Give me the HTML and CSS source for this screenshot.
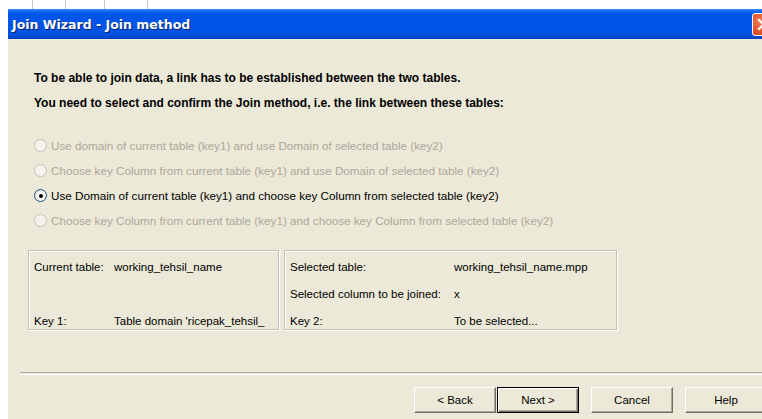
FILE: index.html
```html
<!DOCTYPE html>
<html lang="en">
<head>
<meta charset="utf-8">
<title>Join Wizard - Join method</title>
<link rel="stylesheet" href="styles.css">
</head>
<body>
  <div class="backdrop">
    <span class="tick t1"></span><span class="tick t2"></span><span class="tick t3"></span><span class="tick t4"></span>
  </div>
  <div class="window">
    <div class="titlebar">
      <span class="title">Join Wizard - Join method</span>
      <span class="close-btn" aria-label="Close">
        <svg width="21" height="21" viewBox="0 0 21 21">
          <path d="M6 6 L15 15 M15 6 L6 15" stroke="#fff" stroke-width="2.2" stroke-linecap="square"/>
        </svg>
      </span>
    </div>
    <div class="client">
      <div class="intro">
        <p>To be able to join data, a link has to be established between the two tables.</p>
        <p>You need to select and confirm the Join method, i.e. the link between these tables:</p>
      </div>

      <div class="methods">
        <label class="radio disabled"><span class="dot"></span>Use domain of current table (key1) and use Domain of selected table (key2)</label>
        <label class="radio disabled"><span class="dot"></span>Choose key Column from current table (key1) and use Domain of selected table (key2)</label>
        <label class="radio checked"><span class="dot"></span>Use Domain of current table (key1) and choose key Column from selected table (key2)</label>
        <label class="radio disabled"><span class="dot"></span>Choose key Column from current table (key1) and choose key Column from selected table (key2)</label>
      </div>

      <div class="info">
        <div class="info-box current">
          <span>Current table:</span><span>working_tehsil_name</span>
          <span></span><span></span>
          <span>Key 1:</span><span>Table domain 'ricepak_tehsil_</span>
        </div>
        <div class="info-box selected">
          <span>Selected table:</span><span>working_tehsil_name.mpp</span>
          <span>Selected column to be joined:</span><span>x</span>
          <span>Key 2:</span><span>To be selected...</span>
        </div>
      </div>

      <div class="separator"></div>

      <div class="buttons">
        <button class="btn">&lt; Back</button>
        <button class="btn default">Next &gt;</button>
        <button class="btn spaced">Cancel</button>
        <button class="btn spaced">Help</button>
      </div>
    </div>
  </div>
</body>
</html>
```

FILE: styles.css
```css
html, body {
  margin: 0;
  padding: 0;
  background: #ffffff;
  overflow: hidden;
  width: 762px;
  height: 419px;
}

body {
  font-family: "Liberation Sans", Arial, sans-serif;
  font-size: 12px;
  color: #000;
}

/* strip of the application window behind the dialog */
.backdrop {
  height: 9px;
  display: flex;
  background: #fff;
}
.tick {
  display: block;
  height: 9px;
  border-right: 1px solid #c8c8c8;
}
.t1 { width: 32px; }
.t2 { width: 32px; }
.t3 { width: 38px; }
.t4 { width: 42px; }

.window {
  margin-left: 8px;
  width: 780px;
  height: 410px;
  display: flex;
  flex-direction: column;
  background: #ece9d8;
}

.titlebar {
  height: 30px;
  flex: none;
  display: flex;
  align-items: center;
  justify-content: space-between;
  background: linear-gradient(to bottom,
    #3d8cf7 0px, #0a5ef0 3px, #0055ea 6px, #0054e6 20px, #0050de 26px, #0044c8 29px, #003fb8 30px);
  box-sizing: border-box;
}

.title {
  margin-left: 4px;
  margin-top: 1px;
  font-family: "DejaVu Sans", "Liberation Sans", sans-serif;
  font-weight: bold;
  font-size: 12.5px;
  color: #fff;
  text-shadow: 1px 1px 0 #0a246a;
}

.close-btn {
  width: 21px;
  height: 21px;
  margin-right: 13px;
  margin-top: 1px;
  border: 1px solid #fff;
  border-radius: 3px;
  background: radial-gradient(circle at 35% 35%, #f0805a 0%, #e25a32 45%, #c93c1c 100%);
  display: flex;
  align-items: center;
  justify-content: center;
}

.client {
  flex: 1;
  display: flex;
  flex-direction: column;
}

.intro {
  padding: 30px 0 0 26px;
}
.intro p {
  margin: 0;
  height: 25px;
  line-height: 18px;
  font-weight: bold;
  font-size: 12px;
}

.methods {
  padding: 14px 0 0 26px;
  display: flex;
  flex-direction: column;
}

.radio {
  height: 25px;
  display: flex;
  align-items: center;
  gap: 4px;
  font-size: 11.7px;
  white-space: nowrap;
}
.radio .dot {
  width: 11px;
  height: 11px;
  border-radius: 50%;
  border: 1px solid #1c5180;
  background: radial-gradient(circle at 60% 60%, #fff 0%, #f3f3ef 50%, #d4d1c6 100%);
  flex: none;
  position: relative;
}
.radio.checked .dot::after {
  content: "";
  position: absolute;
  left: 3.5px;
  top: 3.5px;
  width: 4px;
  height: 4px;
  border-radius: 50%;
  background: #000;
}
.radio.disabled {
  color: #aca899;
}
.radio.disabled .dot {
  border-color: #c5c2b2;
  background: #f4f3ee;
}

.info {
  margin: 17px 0 0 20px;
  display: flex;
  gap: 5px;
}

.info-box {
  height: 80px;
  box-sizing: border-box;
  border: 1px solid #c4c0ad;
  box-shadow: inset 1px 1px 0 #fff, 1px 1px 0 #fff;
  display: grid;
  grid-auto-rows: 27px;
  padding: 2px 0 0 5px;
  align-items: center;
  font-size: 11.5px;
  white-space: nowrap;
  overflow: hidden;
}
.info-box span {
  overflow: hidden;
}
.current {
  width: 251px;
  grid-template-columns: 80px 164px;
}
.selected {
  width: 333px;
  grid-template-columns: 164px 160px;
}

.separator {
  margin: 42px 0 0 12px;
  height: 1px;
  border-top: 1px solid #aca899;
  border-bottom: 1px solid #fff;
}

.buttons {
  margin: 12px 0 0 406px;
  display: flex;
  gap: 1px;
}

.btn {
  width: 82px;
  height: 26px;
  box-sizing: border-box;
  font-family: "Liberation Sans", Arial, sans-serif;
  font-size: 11.5px;
  color: #000;
  background: #ece9d8;
  border: 1px solid;
  border-color: #fff #716f64 #716f64 #fff;
  box-shadow: inset -1px -1px 0 #aca899;
  padding: 0;
}
.btn.default {
  border: 1px solid #000;
  box-shadow: inset 1px 1px 0 #fff, inset -1px -1px 0 #716f64, inset -2px -2px 0 #aca899;
}
.btn.spaced {
  margin-left: 11px;
}
```
